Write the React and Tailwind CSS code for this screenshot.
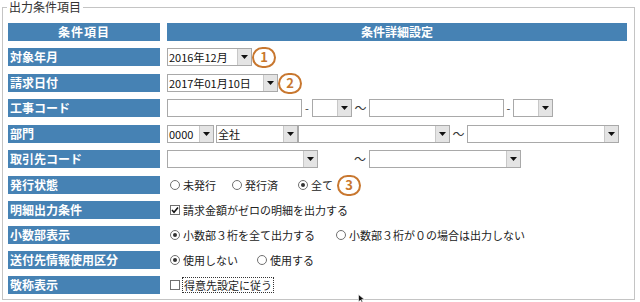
import React from "react";

const FONT = { fontFamily: '"Noto Sans CJK JP", "Noto Sans", sans-serif' };

function Arrow() {
  return (
    <div className="w-[14px] h-[16px] bg-[#e4e4e4] border-l border-[#c8c8c8] flex items-center justify-center shrink-0">
      <svg width="7" height="4" viewBox="0 0 7 4">
        <path d="M0 0 L7 0 L3.5 4 Z" fill="#111" />
      </svg>
    </div>
  );
}

function Select({ w, text }) {
  return (
    <div className={`${w} h-[18px] border border-[#a9a9a9] bg-white flex items-center shrink-0`}>
      <span className="flex-1 pl-[1px] text-[11px] leading-[16px] text-[#111] whitespace-nowrap">{text}</span>
      <Arrow />
    </div>
  );
}

function Input({ w }) {
  return <div className={`${w} h-[18px] border border-[#a9a9a9] bg-white shrink-0`} />;
}

function Mark({ n }) {
  return (
    <div className="w-[24px] h-[21px] rounded-full border-2 border-[#c8772f] text-[#c8772f] text-[13px] font-semibold leading-[16px] flex items-center justify-center shrink-0 bg-white">
      {n}
    </div>
  );
}

function Radio({ on, label, w }) {
  return (
    <div className={`${w} flex items-center shrink-0`}>
      <div className="w-[10px] h-[10px] rounded-full border border-[#707070] flex items-center justify-center bg-white">
        {on && <div className="w-[4px] h-[4px] rounded-full bg-[#333]" />}
      </div>
      <span className="ml-[3px] text-[11px] leading-[16px] text-[#222] whitespace-nowrap">{label}</span>
    </div>
  );
}

function Check({ on }) {
  return (
    <div className="w-[10px] h-[10px] border border-[#707070] bg-white flex items-center justify-center shrink-0">
      {on && (
        <svg width="8" height="8" viewBox="0 0 8 8">
          <path d="M1 4 L3 6.2 L7 1.5" stroke="#111" strokeWidth="1.6" fill="none" />
        </svg>
      )}
    </div>
  );
}

function Row({ h, label, children }) {
  return (
    <div className={`${h} flex items-start`}>
      <div className="w-[152px] h-[18px] bg-[#4682b4] text-white font-bold text-[12px] leading-[16px] flex items-center pl-[2px]">
        {label}
      </div>
      <div className="ml-[7px] w-[460px] h-[18px] flex items-center">{children}</div>
    </div>
  );
}

export default function App() {
  return (
    <div className="w-[640px] h-[302px] bg-white relative overflow-hidden" style={FONT}>
      <div className="ml-[2px] mt-[7px] w-[633px] h-[293px] border border-[#c4c4c4] relative pl-[5px] pt-[15px]">
        <div className="absolute left-[4px] top-[-9px] bg-white px-[2px] text-[12px] leading-[16px] text-[#333]">
          出力条件項目
        </div>

        <div className="h-[25px] flex items-start">
          <div className="w-[152px] h-[18px] bg-[#4682b4] text-white font-bold text-[12px] leading-[16px] flex items-center justify-center tracking-[1px]">
            条件項目
          </div>
          <div className="ml-[7px] w-[460px] h-[18px] bg-[#4682b4] text-white font-bold text-[12px] leading-[16px] flex items-center justify-center">
            条件詳細設定
          </div>
        </div>

        <Row h="h-[26px]" label="対象年月">
          <Select w="w-[85px]" text="2016年12月" />
          <Mark n="1" />
        </Row>

        <Row h="h-[25px]" label="請求日付">
          <Select w="w-[111px]" text="2017年01月10日" />
          <Mark n="2" />
        </Row>

        <Row h="h-[26px]" label="工事コード">
          <Input w="w-[135px]" />
          <span className="w-[10px] text-center text-[11px] leading-[16px] text-[#333]">-</span>
          <Select w="w-[40px]" text="" />
          <span className="w-[17px] text-center text-[12px] leading-[16px] text-[#333]">～</span>
          <Input w="w-[135px]" />
          <span className="w-[9px] text-center text-[11px] leading-[16px] text-[#333]">-</span>
          <Select w="w-[40px]" text="" />
        </Row>

        <Row h="h-[25px]" label="部門">
          <Select w="w-[47px]" text="0000" />
          <div className="w-[2px]" />
          <Select w="w-[82px]" text="全社" />
          <Select w="w-[152px]" text="" />
          <span className="w-[17px] text-center text-[12px] leading-[16px] text-[#333]">～</span>
          <Select w="w-[152px]" text="" />
        </Row>

        <Row h="h-[26px]" label="取引先コード">
          <Select w="w-[151px]" text="" />
          <span className="w-[51px] text-right pr-[3px] text-[12px] leading-[16px] text-[#333]">～</span>
          <Select w="w-[152px]" text="" />
        </Row>

        <Row h="h-[25px]" label="発行状態">
          <div className="w-[3px]" />
          <Radio w="w-[62px]" label="未発行" />
          <Radio w="w-[66px]" label="発行済" />
          <Radio w="w-[39px]" label="全て" on />
          <Mark n="3" />
        </Row>

        <Row h="h-[25px]" label="明細出力条件">
          <div className="w-[3px]" />
          <Check on />
          <span className="ml-[3px] text-[11px] leading-[16px] text-[#222]">請求金額がゼロの明細を出力する</span>
        </Row>

        <Row h="h-[25px]" label="小数部表示">
          <div className="w-[3px]" />
          <Radio w="w-[166px]" label="小数部３桁を全て出力する" on />
          <Radio w="w-[200px]" label="小数部３桁が０の場合は出力しない" />
        </Row>

        <Row h="h-[25px]" label="送付先情報使用区分">
          <div className="w-[3px]" />
          <Radio w="w-[87px]" label="使用しない" on />
          <Radio w="w-[80px]" label="使用する" />
        </Row>

        <Row h="h-[18px]" label="敬称表示">
          <div className="w-[3px]" />
          <Check />
          <span className="ml-[2px] border border-dotted border-[#333] px-[1px] h-[16px] flex items-center text-[11px] leading-[14px] text-[#222]">
            得意先設定に従う
          </span>
        </Row>
      </div>

      <svg className="absolute left-[358px] top-[294px]" width="8" height="10" viewBox="0 0 8 10">
        <path d="M0.5 0.5 L0.5 8 L2.5 6 L4 9 L5 8.5 L3.7 5.6 L6.5 5.6 Z" fill="#111" stroke="#fff" strokeWidth="0.6" />
      </svg>
    </div>
  );
}
